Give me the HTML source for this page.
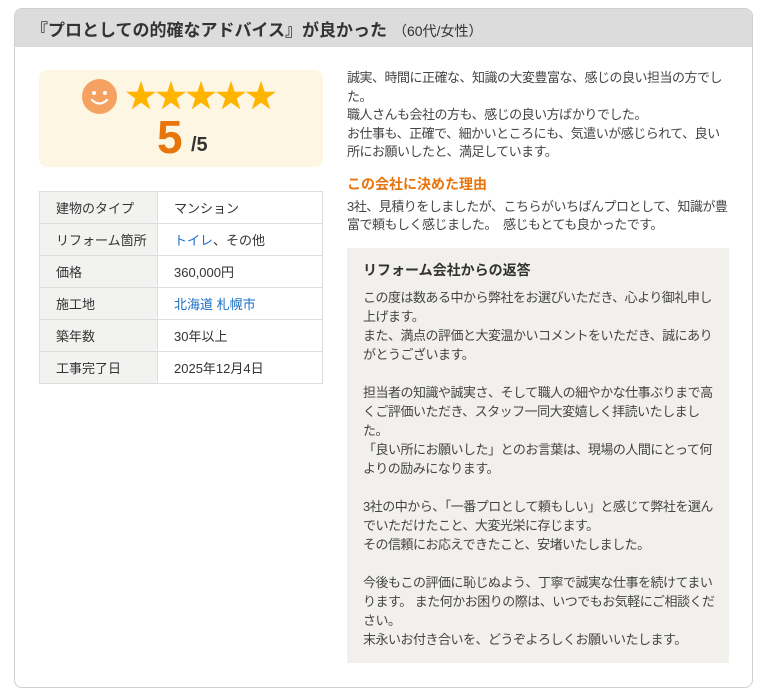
<!DOCTYPE html>
<html><head><meta charset="utf-8"><style>
*{margin:0;padding:0;box-sizing:border-box}
body{width:768px;height:689px;background:#fff;font-family:"Liberation Sans","Noto Sans CJK JP",sans-serif;color:#333;position:relative;overflow:hidden}
.card{position:absolute;left:14px;top:8px;width:739px;height:680px;border:1px solid #d0d0d0;border-radius:8px;overflow:hidden}
.hd{height:38px;background:#dcdcdc;padding:7px 0 0 16px;font-size:17px;font-weight:bold;color:#333}
.hd span{font-size:14px;font-weight:normal;margin-left:6px}
.rate{position:absolute;left:24px;top:61px;width:284px;height:97px;background:#fdf6e3;border-radius:8px}
.face{position:absolute;left:43px;top:9px;width:35px;height:35px;border-radius:50%;background:#f5a161}
.stars{position:absolute;left:86px;top:6px;font-size:32px;color:#ffb400;letter-spacing:-2px;line-height:40px}
.num{position:absolute;left:118px;top:40px;font-size:46px;font-weight:bold;color:#e8740c;line-height:54px}
.den{position:absolute;left:152px;top:64px;font-size:20px;font-weight:bold;color:#333}
table{position:absolute;left:24px;top:182px;width:284px;border-collapse:collapse;font-size:13px}
td{border:1px solid #ddd;height:32px;padding-left:16px}
td:first-child{width:118px;background:#f2f2f0}
a{color:#1a6fc4;text-decoration:none}
.r{position:absolute;left:332px;top:60px;width:382px;font-size:13px;letter-spacing:-0.5px;line-height:18.6px;color:#444}
.r h3{color:#e8740c;font-size:14px;margin:13px 0 4px;letter-spacing:0}
.reply{margin-top:13px;background:#f2f0ec;width:382px;padding:13px 14px 14px 16px;line-height:19px}
.reply h4{font-size:14px;color:#333;margin-bottom:8px;letter-spacing:0}
</style></head><body>
<div class="card">
<div class="hd">『プロとしての的確なアドバイス』が良かった<span>（60代/女性）</span></div>
<div class="rate">
<div class="face"><svg width="35" height="35"><circle cx="12" cy="14" r="2" fill="#fff"/><circle cx="23" cy="14" r="2" fill="#fff"/><path d="M10 21 Q17.5 28 25 21" stroke="#fff" stroke-width="2.2" fill="none" stroke-linecap="round"/></svg></div>
<div class="stars">★★★★★</div>
<div class="num">5</div><div class="den">/5</div>
</div>
<table>
<tr><td>建物のタイプ</td><td>マンション</td></tr>
<tr><td>リフォーム箇所</td><td><a>トイレ</a>、その他</td></tr>
<tr><td>価格</td><td>360,000円</td></tr>
<tr><td>施工地</td><td><a>北海道 札幌市</a></td></tr>
<tr><td>築年数</td><td>30年以上</td></tr>
<tr><td>工事完了日</td><td>2025年12月4日</td></tr>
</table>
<div class="r">
<p>誠実、時間に正確な、知識の大変豊富な、感じの良い担当の方でした。<br>職人さんも会社の方も、感じの良い方ばかりでした。<br>お仕事も、正確で、細かいところにも、気遣いが感じられて、良い所にお願いしたと、満足しています。</p>
<h3>この会社に決めた理由</h3>
<p>3社、見積りをしましたが、こちらがいちばんプロとして、知識が豊富で頼もしく感じました。　感じもとても良かったです。</p>
<div class="reply"><h4>リフォーム会社からの返答</h4>
<p>この度は数ある中から弊社をお選びいただき、心より御礼申し上げます。<br>また、満点の評価と大変温かいコメントをいただき、誠にありがとうございます。<br><br>担当者の知識や誠実さ、そして職人の細やかな仕事ぶりまで高くご評価いただき、スタッフ一同大変嬉しく拝読いたしました。<br>「良い所にお願いした」とのお言葉は、現場の人間にとって何よりの励みになります。<br><br>3社の中から、「一番プロとして頼もしい」と感じて弊社を選んでいただけたこと、大変光栄に存じます。<br>その信頼にお応えできたこと、安堵いたしました。<br><br>今後もこの評価に恥じぬよう、丁寧で誠実な仕事を続けてまいります。 また何かお困りの際は、いつでもお気軽にご相談ください。<br>末永いお付き合いを、どうぞよろしくお願いいたします。</p></div>
</div>
</div>
</body></html>
